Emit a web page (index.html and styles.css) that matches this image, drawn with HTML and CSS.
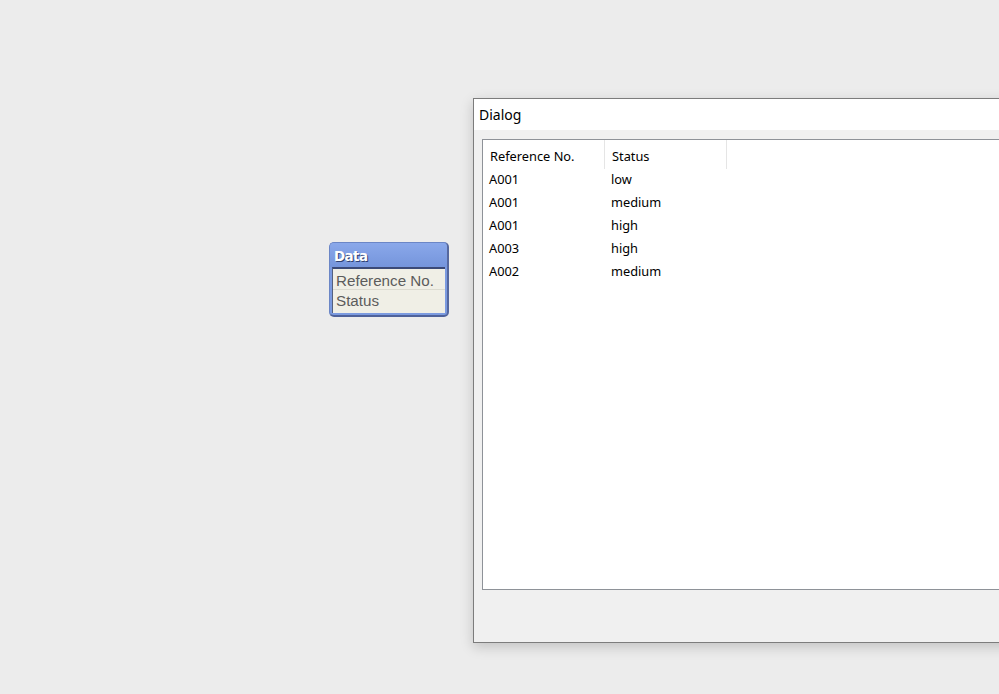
FILE: index.html
```html
<!DOCTYPE html>
<html>
<head>
<meta charset="utf-8">
<link rel="stylesheet" href="styles.css">
</head>
<body>
<div class="canvas">
  <div class="node">
    <div class="node-title">Data</div>
    <div class="node-fields">
      <div class="field">Reference No.</div>
      <div class="field">Status</div>
    </div>
  </div>

  <div class="dialog">
    <div class="dialog-title">Dialog</div>
    <div class="dialog-body">
      <div class="listview">
        <div class="lv-header">
          <div class="lv-col">Reference No.</div>
          <div class="lv-col">Status</div>
        </div>
        <div class="lv-row"><span class="c1">A001</span><span class="c2">low</span></div>
        <div class="lv-row"><span class="c1">A001</span><span class="c2">medium</span></div>
        <div class="lv-row"><span class="c1">A001</span><span class="c2">high</span></div>
        <div class="lv-row"><span class="c1">A003</span><span class="c2">high</span></div>
        <div class="lv-row"><span class="c1">A002</span><span class="c2">medium</span></div>
      </div>
    </div>
  </div>
</div>
</body>
</html>
```

FILE: styles.css
```css
html, body {
  margin: 0;
  padding: 0;
  width: 999px;
  height: 694px;
  overflow: hidden;
  background: #ececec;
}

.canvas {
  position: relative;
  width: 999px;
  height: 694px;
}

/* Diagram node */
.node {
  position: absolute;
  left: 329px;
  top: 242px;
  width: 120px;
  height: 75px;
  padding: 0 2px 2px 2px;
  background: #7c9be0;
  border: 1px solid #6b86c6;
  border-bottom: 2px solid #4f629a;
  border-right: 2px solid #56689e;
  border-radius: 5px;
  display: flex;
  flex-direction: column;
  box-sizing: border-box;
}

.node-title {
  height: 24px;
  line-height: 27px;
  padding-left: 4px;
  font-family: "DejaVu Sans", sans-serif;
  font-weight: bold;
  font-size: 13.5px;
  color: #ffffff;
  text-shadow: 1px 1px 0 #2e3f70;
  letter-spacing: -0.6px;
  background: linear-gradient(#8aa8ea, #7595dc);
  margin: 0 -2px;
  border-radius: 4px 4px 0 0;
}

.node-fields {
  flex: 1;
  background: #f0efe6;
  border-top: 2px solid #3b4a78;
  border-left: 1px solid #55617f;
  display: flex;
  flex-direction: column;
}

.field {
  height: 20px;
  line-height: 23px;
  padding-left: 3px;
  font-family: "Liberation Sans", Arial, sans-serif;
  font-size: 15.2px;
  color: #5c5c5c;
}

.field + .field {
  border-top: 1px solid #dcdbd0;
  line-height: 21px;
}

/* Dialog window */
.dialog {
  position: absolute;
  left: 473px;
  top: 98px;
  width: 560px;
  height: 545px;
  box-sizing: border-box;
  border: 1px solid #7c7c7c;
  background: #f0f0f0;
  display: flex;
  flex-direction: column;
  box-shadow: 0 4px 12px rgba(0, 0, 0, 0.18);
}

.dialog-title {
  height: 31px;
  background: #ffffff;
  line-height: 32px;
  padding-left: 5px;
  font-family: "Noto Sans", "Open Sans", sans-serif;
  font-size: 14px;
  color: #000000;
}

.dialog-body {
  flex: 1;
  padding: 9px 0 52px 8px;
  display: flex;
}

.listview {
  flex: 1;
  background: #ffffff;
  border: 1px solid #8e9298;
  border-right: none;
  font-family: "Noto Sans", "Open Sans", sans-serif;
  font-size: 12.8px;
  color: #000000;
}

.lv-header {
  display: flex;
  height: 29px;
}

.lv-col {
  width: 122px;
  box-sizing: border-box;
  padding-left: 7px;
  line-height: 33px;
  border-right: 1px solid #e5e5e5;
}

.lv-row {
  display: flex;
  height: 23px;
  line-height: 21px;
}

.lv-row .c1,
.lv-row .c2 {
  width: 122px;
  box-sizing: border-box;
  padding-left: 6px;
}
```
